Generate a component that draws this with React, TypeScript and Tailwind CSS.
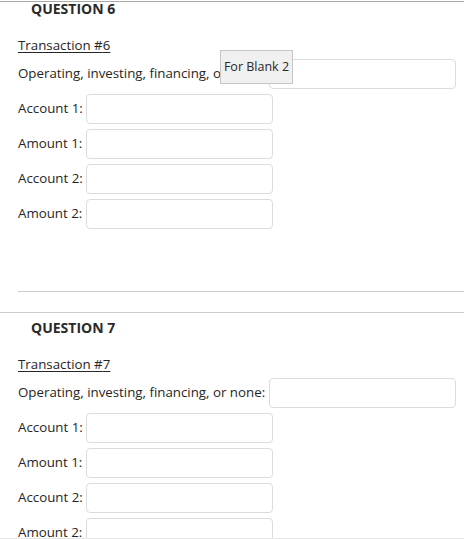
import React from "react";

function Field({ label }: { label: string }) {
  return (
    <div className="flex h-[30px] items-center">
      <span className="w-[68px] shrink-0 whitespace-nowrap">{label}</span>
      <div className="h-[30px] w-[187px] rounded-[4px] border border-[#dcdcdc] bg-white" />
    </div>
  );
}

function Question({
  n,
  headTop,
  fieldsTop,
  tooltip,
}: {
  n: number;
  headTop: string;
  fieldsTop: string;
  tooltip?: boolean;
}) {
  return (
    <div className="relative">
      <div className={`${headTop} pl-[31px] text-[14px] font-bold leading-[14px] text-[#2a2a2a]`}>
        QUESTION {n}
      </div>
      <div className="mt-[22px] pl-[18px] text-[13.3px] leading-[14px]">
        <span className="underline underline-offset-2">Transaction #{n}</span>
      </div>
      <div className={`${fieldsTop} flex flex-col gap-[5px] pl-[18px] text-[13.3px]`}>
        <div className="flex h-[30px] items-center">
          <span className="w-[251px] shrink-0 overflow-hidden whitespace-nowrap">
            Operating, investing, financing, or none:
          </span>
          <div className="h-[30px] w-[187px] rounded-[4px] border border-[#dcdcdc] bg-white" />
        </div>
        <Field label="Account 1:" />
        <Field label="Amount 1:" />
        <Field label="Account 2:" />
        <Field label="Amount 2:" />
      </div>
      {tooltip && (
        <div className="absolute left-[220px] top-[48px] flex h-[34px] w-[73px] items-center justify-center border border-[#c6c6c6] bg-[#f0f0f0] pt-px text-[12.5px] text-[#2a2a2a]">
          For Blank 2
        </div>
      )}
    </div>
  );
}

export default function App() {
  return (
    <div
      className="relative h-[539px] w-[464px] overflow-hidden bg-white text-[#262626]"
      style={{ fontFamily: '"Open Sans", "Noto Sans", sans-serif' }}
    >
      <div className="mt-px border-t border-[#a9a9a9]">
        <Question n={6} headTop="mt-0" fieldsTop="mt-[7px]" tooltip />
        <div className="ml-[18px] mt-[62px] border-t border-[#cccccc]" />
        <div className="mt-[20px] border-t border-[#cccccc]" />
        <Question n={7} headTop="mt-[8px]" fieldsTop="mt-[7px]" />
      </div>
      <div className="absolute bottom-0 left-0 h-px w-full bg-[#e6e6e6]" />
    </div>
  );
}
